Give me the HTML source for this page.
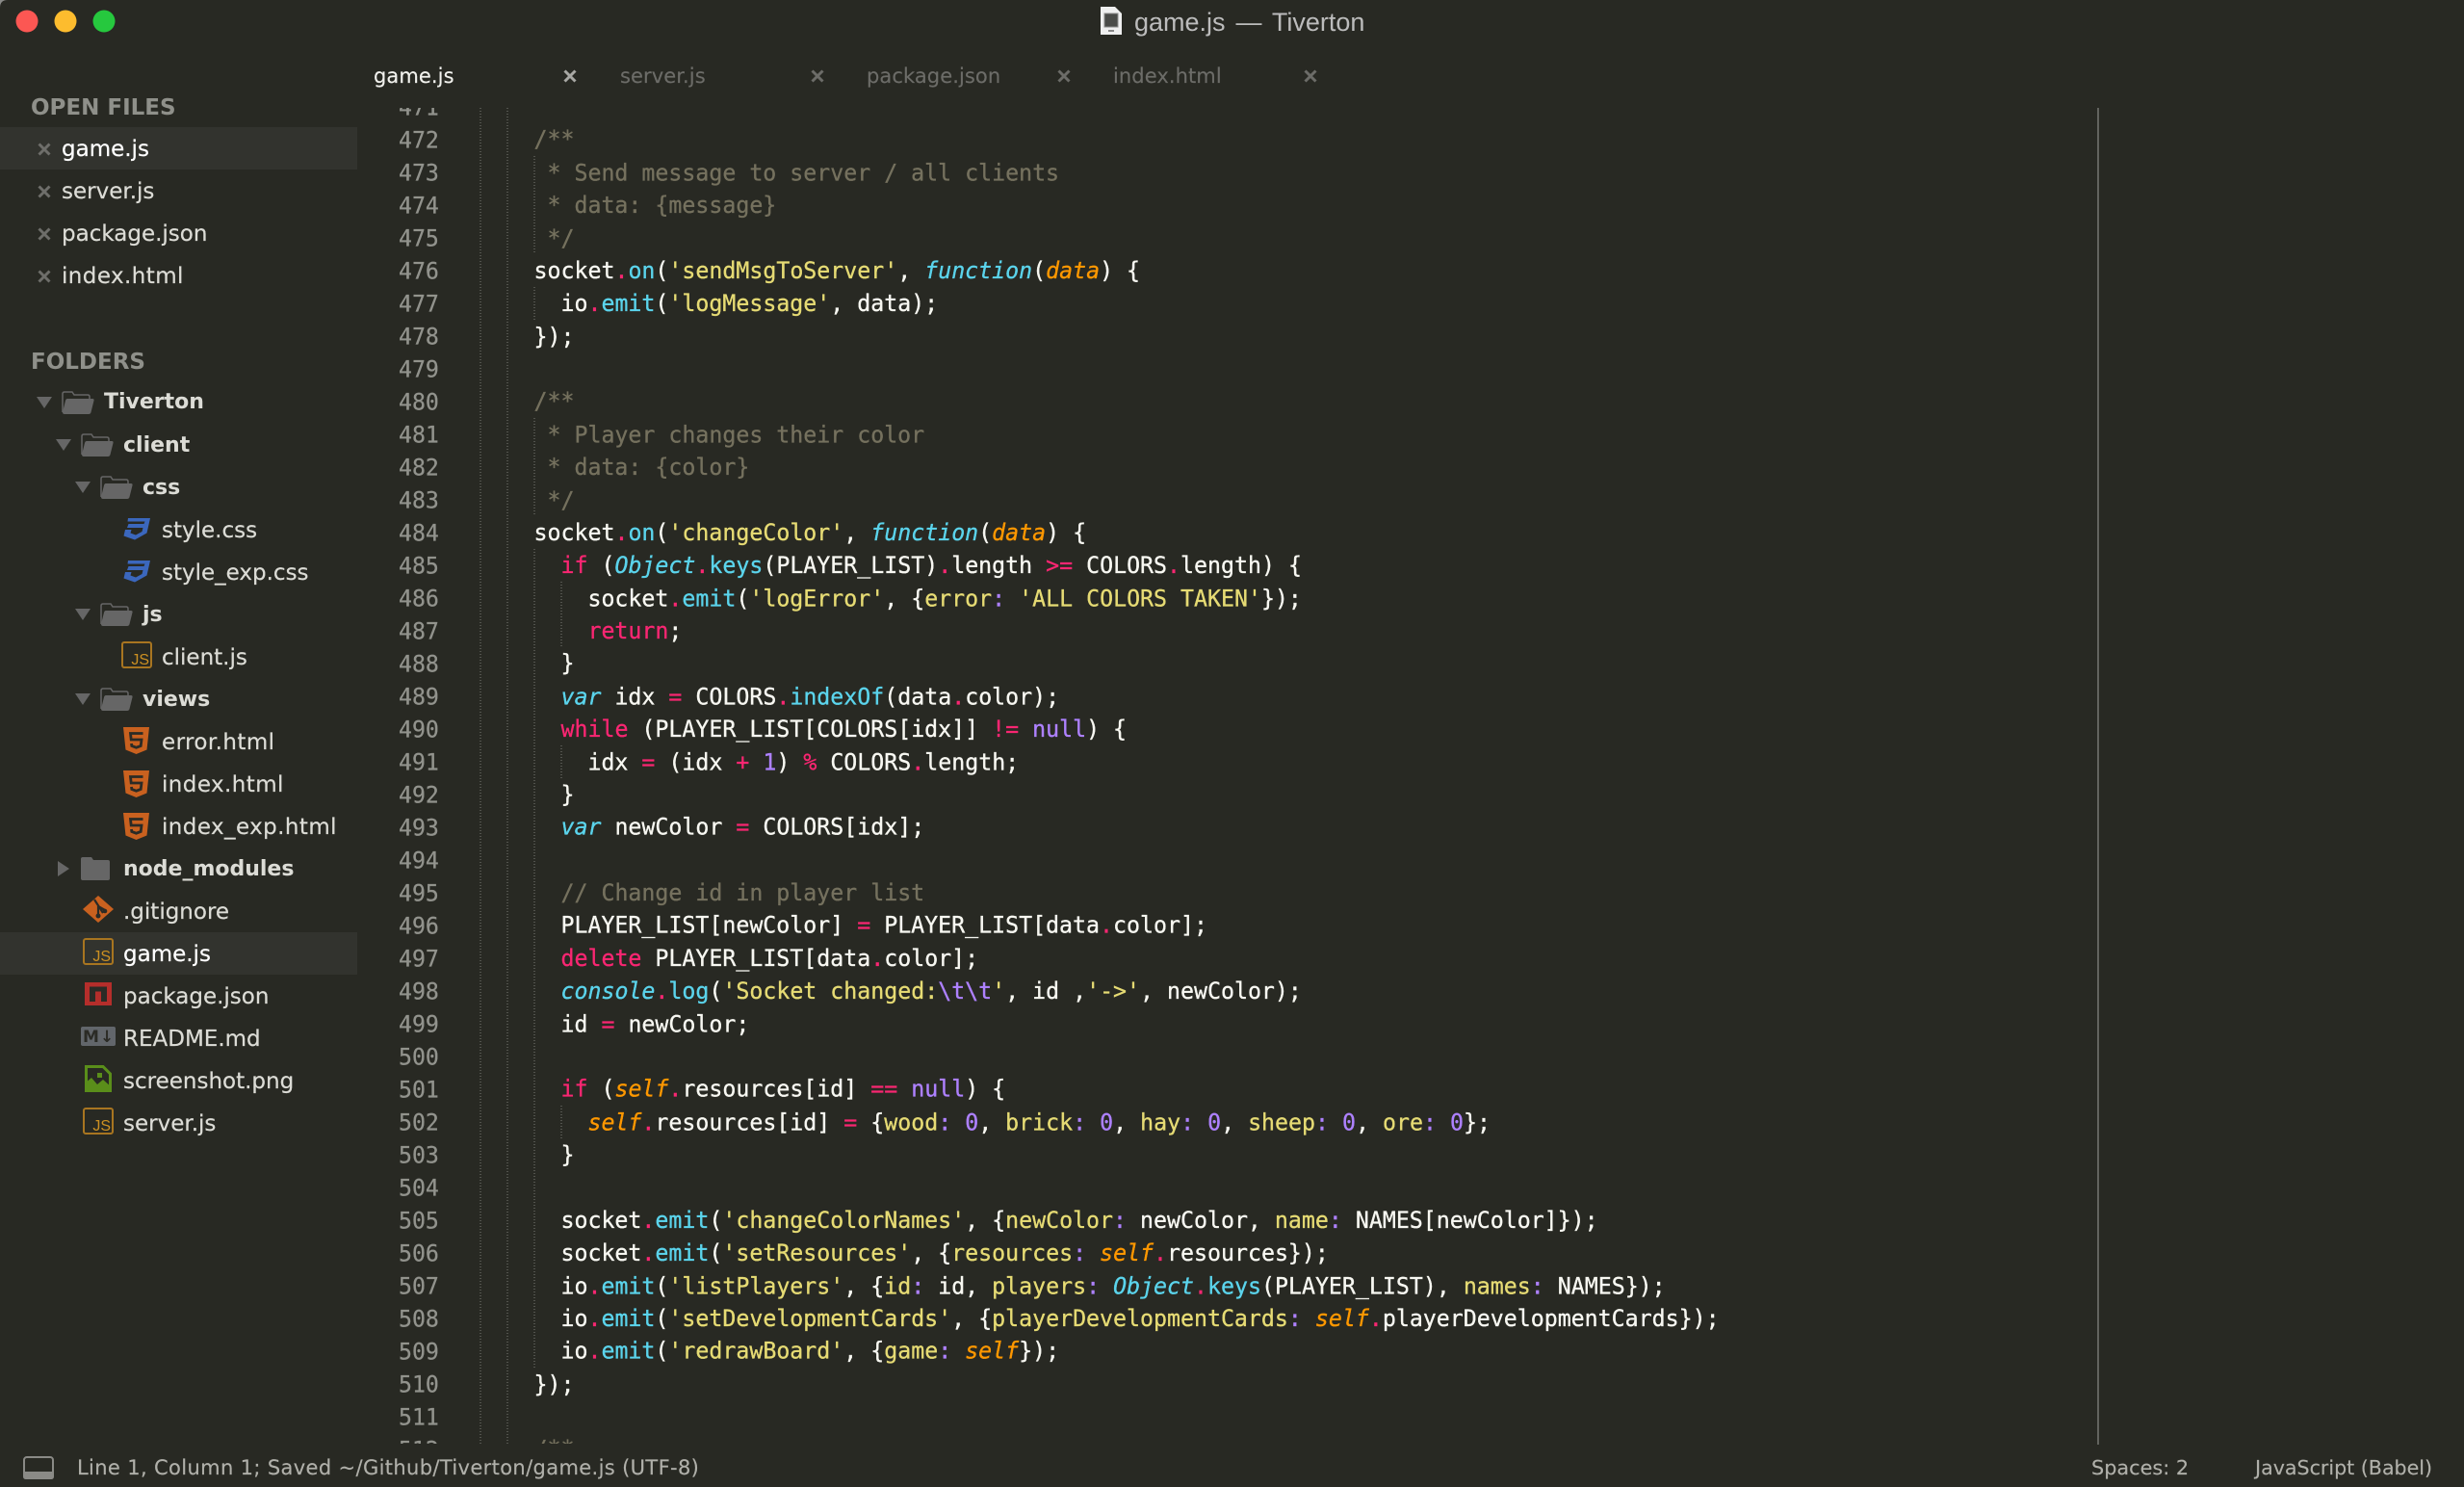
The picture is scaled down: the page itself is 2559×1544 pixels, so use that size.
<!DOCTYPE html>
<html><head><meta charset="utf-8"><title>game.js — Tiverton</title>
<style>
html,body{margin:0;padding:0;background:#282923;}
#w{position:relative;width:2559px;height:1544px;overflow:hidden;background:#282923;font-family:"DejaVu Sans","Liberation Sans",sans-serif;}
.a{position:absolute;white-space:pre;}
.s{position:absolute;white-space:pre;font-size:23px;line-height:44px;height:44px;color:#dcdcd6;margin-top:1px;-webkit-text-stroke:.2px currentColor;}
.m{letter-spacing:.42px;}
.b{font-weight:bold;font-size:22px;color:#dcdcd6;-webkit-text-stroke:0;}
.h{font-weight:bold;font-size:23px;color:#8f908a;margin-top:2px;-webkit-text-stroke:0;}
.sel{position:absolute;left:0;width:371px;height:44px;background:#32332e;}
.t{position:absolute;top:57px;line-height:44px;font-size:21px;letter-spacing:.08px;color:#6c6c68;white-space:pre;-webkit-text-stroke:.15px currentColor;}
.i{position:absolute;display:block;overflow:visible;}
.js{position:absolute;width:28px;height:24px;border:2px solid #a87520;border-radius:3px;color:#cc9022;font-size:16px;line-height:14px;}
.js span{position:absolute;right:1px;bottom:-1px;font-family:"Liberation Sans",sans-serif;}
#ln{position:absolute;left:0;top:112px;width:480px;height:1387px;overflow:hidden;}
#ln div{position:absolute;left:414px;font:23.2px/34px "DejaVu Sans Mono","Liberation Mono",monospace;color:#92938d;height:34px;margin-top:1px;transform:scaleY(1.05);-webkit-text-stroke:.25px currentColor;}
#clip{position:absolute;left:554.5px;top:112px;width:1620px;height:1387px;overflow:hidden;}
#clip pre{margin:-17px 0 0 0;font:23.24px/32.381px "DejaVu Sans Mono","Liberation Mono",monospace;color:#f8f8f2;white-space:pre;transform:scaleY(1.05);transform-origin:0 0;-webkit-text-stroke:.3px currentColor;}
.g{position:absolute;width:2px;background:repeating-linear-gradient(#52534d 0 1px,transparent 1px 3px);}
.c{color:#75715e}.k{color:#f92672}.f{color:#5bd4ec}.y{color:#e6db74}.n{color:#ae81ff}
.v{color:#5bd4ec;font-style:italic}.o{color:#ff9800;font-style:italic}
.st{position:absolute;top:1502px;line-height:44px;font-size:21px;color:#b0b0aa;white-space:pre;-webkit-text-stroke:.15px currentColor;}
</style></head><body><div id="w">

<svg width="0" height="0" style="position:absolute"><defs>
<symbol id="fo" viewBox="0 0 34 24"><path d="M1 22V3Q1 1 3 1H11L13 4H27Q29 4 29 6V8" fill="none" stroke="#666" stroke-width="1.5"/><path d="M1 22L4 10Q4.500 8 6 8H32Q34 8 33.500 10L30.500 22Q30 24 28 24H3Q1 24 1 22Z" fill="#666"/></symbol>
<symbol id="cs" viewBox="0 0 28 23"><path d="M5 0H28L24.500 15.500L12 22.500L0.500 18.500L2 12H8.500L7.500 15.500L13 17.500L19.500 14L20.500 10H4L5.500 6H21.500L22.500 3.500H4.500Z" fill="#3b67bd"/></symbol>
<symbol id="ht" viewBox="0 0 27 28"><path d="M0 0H27L24.500 23.500L13.500 28L2.500 23.500Z" fill="#c9611f"/><path d="M20.500 6.500H7.500L8.200 13H19L18.200 19.500L13.500 21.200L8.800 19.500L8.500 17" fill="none" stroke="#2b2b26" stroke-width="2.800"/></symbol>
<symbol id="dn" viewBox="0 0 16 12"><path d="M0 0H16L8 12Z" fill="#666"/></symbol>
<symbol id="x" viewBox="0 0 14 14"><path d="M1.500 1.500L12.500 12.500M12.500 1.500L1.500 12.500" stroke="currentColor" stroke-width="3" fill="none"/></symbol>
</defs></svg>

<!-- corners -->
<svg class="i" style="left:0;top:0" width="10" height="10"><path d="M0 0H8Q0 0 0 8Z" fill="#8a8a88"/></svg>

<!-- traffic lights -->
<svg class="i" style="left:0;top:0" width="130" height="44"><circle cx="28" cy="22" r="11.500" fill="#fc5753"/><circle cx="68" cy="22" r="11.500" fill="#fdbc2e"/><circle cx="108" cy="22" r="11.500" fill="#26c83e"/></svg>

<!-- title -->
<svg class="i" style="left:1143px;top:7px" width="23" height="30"><path d="M0 0H15L22 7V29H0Z" fill="#efefef"/><rect x="4" y="7" width="14" height="14" fill="#4a4b48" stroke="#8c8c8c" stroke-width="1"/><rect x="8" y="24" width="6" height="2" fill="#888"/></svg>
<div class="a" style="left:1178px;top:0;line-height:46px;font-family:'Liberation Sans',sans-serif;font-size:27px;word-spacing:3.4px;color:#bcbcbc;">game.js — Tiverton</div>

<!-- tabs -->
<div class="t" style="left:388px;color:#f2f2ee;">game.js</div>
<svg class="i" style="left:585px;top:72px;color:#a8a8a4" width="14" height="14"><use href="#x"/></svg>
<div class="t" style="left:644px;">server.js</div>
<svg class="i" style="left:842px;top:72px;color:#6c6c68" width="14" height="14"><use href="#x"/></svg>
<div class="t" style="left:900px;">package.json</div>
<svg class="i" style="left:1098px;top:72px;color:#6c6c68" width="14" height="14"><use href="#x"/></svg>
<div class="t" style="left:1156px;">index.html</div>
<svg class="i" style="left:1354px;top:72px;color:#6c6c68" width="14" height="14"><use href="#x"/></svg>

<!-- sidebar highlights -->
<div class="sel" style="top:132px"></div>
<div class="sel" style="top:968px"></div>

<!-- open files -->
<div class="s h" style="left:32px;top:88px">OPEN FILES</div>
<svg class="i" style="left:39px;top:148px;color:#6e6e6a" width="14" height="14"><use href="#x"/></svg>
<div class="s" style="left:64px;top:132px;color:#fff">game.js</div>
<svg class="i" style="left:39px;top:192px;color:#6e6e6a" width="14" height="14"><use href="#x"/></svg>
<div class="s" style="left:64px;top:176px">server.js</div>
<svg class="i" style="left:39px;top:236px;color:#6e6e6a" width="14" height="14"><use href="#x"/></svg>
<div class="s" style="left:64px;top:220px">package.json</div>
<svg class="i" style="left:39px;top:280px;color:#6e6e6a" width="14" height="14"><use href="#x"/></svg>
<div class="s m" style="left:64px;top:264px">index.html</div>

<!-- folders -->
<div class="s h" style="left:32px;top:352px">FOLDERS</div>

<svg class="i" style="left:38px;top:412px" width="16" height="12"><use href="#dn"/></svg>
<svg class="i" style="left:64px;top:406px" width="34" height="24"><use href="#fo"/></svg>
<div class="s b" style="left:108px;top:395px">Tiverton</div>

<svg class="i" style="left:58px;top:456px" width="16" height="12"><use href="#dn"/></svg>
<svg class="i" style="left:84px;top:450px" width="34" height="24"><use href="#fo"/></svg>
<div class="s b" style="left:128px;top:440px">client</div>

<svg class="i" style="left:78px;top:500px" width="16" height="12"><use href="#dn"/></svg>
<svg class="i" style="left:104px;top:494px" width="34" height="24"><use href="#fo"/></svg>
<div class="s b" style="left:148px;top:484px">css</div>

<svg class="i" style="left:128px;top:538px" width="28" height="23"><use href="#cs"/></svg>
<div class="s" style="left:168px;top:528px">style.css</div>
<svg class="i" style="left:128px;top:582px" width="28" height="23"><use href="#cs"/></svg>
<div class="s" style="left:168px;top:572px">style_exp.css</div>

<svg class="i" style="left:78px;top:632px" width="16" height="12"><use href="#dn"/></svg>
<svg class="i" style="left:104px;top:626px" width="34" height="24"><use href="#fo"/></svg>
<div class="s b" style="left:148px;top:616px">js</div>

<div class="js" style="left:126px;top:666px"><span>JS</span></div>
<div class="s" style="left:168px;top:660px">client.js</div>

<svg class="i" style="left:78px;top:720px" width="16" height="12"><use href="#dn"/></svg>
<svg class="i" style="left:104px;top:714px" width="34" height="24"><use href="#fo"/></svg>
<div class="s b" style="left:148px;top:704px">views</div>

<svg class="i" style="left:128px;top:755px" width="27" height="28"><use href="#ht"/></svg>
<div class="s m" style="left:168px;top:748px">error.html</div>
<svg class="i" style="left:128px;top:800px" width="27" height="28"><use href="#ht"/></svg>
<div class="s m" style="left:168px;top:792px">index.html</div>
<svg class="i" style="left:128px;top:844px" width="27" height="28"><use href="#ht"/></svg>
<div class="s m" style="left:168px;top:836px">index_exp.html</div>

<svg class="i" style="left:60px;top:894px" width="12" height="16"><path d="M0 0L12 8L0 16Z" fill="#666"/></svg>
<svg class="i" style="left:84px;top:890px" width="30" height="24"><path d="M0 2Q0 0 2 0H11L13 3H28Q30 3 30 5V22Q30 24 28 24H2Q0 24 0 22Z" fill="#666"/></svg>
<div class="s b" style="left:128px;top:880px">node_modules</div>

<svg class="i" style="left:86px;top:930px" width="32" height="28"><path d="M16 0L32 14L16 28L0 14Z" fill="#c9611f"/><path d="M12 4L21 18M16 11V21M16 11L23 15" stroke="#2b2b26" stroke-width="2.200" fill="none"/><circle cx="16" cy="21" r="2.500" fill="#2b2b26"/><circle cx="23" cy="16" r="2.300" fill="#2b2b26"/></svg>
<div class="s" style="left:128px;top:924px">.gitignore</div>

<div class="js" style="left:86px;top:974px"><span>JS</span></div>
<div class="s" style="left:128px;top:968px;color:#fff">game.js</div>

<svg class="i" style="left:88px;top:1020px" width="28" height="24"><rect width="28" height="24" fill="#b52e2b"/><path d="M5 4.500H23V20H17V9.500H11V20H5Z" fill="#2b2b26"/></svg>
<div class="s" style="left:128px;top:1012px">package.json</div>

<svg class="i" style="left:84px;top:1066px" width="36" height="20"><rect width="36" height="20" rx="2" fill="#62666b"/><text x="2" y="16" font-family="DejaVu Sans,sans-serif" font-weight="bold" font-size="17" fill="#2b2b26">M</text><text x="20" y="16" font-family="DejaVu Sans,sans-serif" font-weight="bold" font-size="17" fill="#2b2b26">↓</text></svg>
<div class="s" style="left:128px;top:1056px">README.md</div>

<svg class="i" style="left:88px;top:1106px" width="28" height="28"><path d="M1.500 1.500H19L26.500 9V26.500H1.500Z" fill="none" stroke="#5a8e1a" stroke-width="3"/><path d="M0 28V19L7 13L13 20L19 15L28 23V28Z" fill="#5a8e1a"/><rect x="13" y="8" width="5" height="5" fill="#5a8e1a"/></svg>
<div class="s" style="left:128px;top:1100px">screenshot.png</div>

<div class="js" style="left:86px;top:1150px"><span>JS</span></div>
<div class="s" style="left:128px;top:1144px">server.js</div>

<!-- gutter numbers -->
<div id="ln">
<div style="top:-18px">471</div><div style="top:16px">472</div><div style="top:50px">473</div><div style="top:84px">474</div><div style="top:118px">475</div><div style="top:152px">476</div><div style="top:186px">477</div><div style="top:220px">478</div><div style="top:254px">479</div><div style="top:288px">480</div><div style="top:322px">481</div><div style="top:356px">482</div><div style="top:390px">483</div><div style="top:424px">484</div><div style="top:458px">485</div><div style="top:492px">486</div><div style="top:526px">487</div><div style="top:560px">488</div><div style="top:594px">489</div><div style="top:628px">490</div><div style="top:662px">491</div><div style="top:696px">492</div><div style="top:730px">493</div><div style="top:764px">494</div><div style="top:798px">495</div><div style="top:832px">496</div><div style="top:866px">497</div><div style="top:900px">498</div><div style="top:934px">499</div><div style="top:968px">500</div><div style="top:1002px">501</div><div style="top:1036px">502</div><div style="top:1070px">503</div><div style="top:1104px">504</div><div style="top:1138px">505</div><div style="top:1172px">506</div><div style="top:1206px">507</div><div style="top:1240px">508</div><div style="top:1274px">509</div><div style="top:1308px">510</div><div style="top:1342px">511</div><div style="top:1376px">512</div>
</div>

<!-- guides -->
<div class="g" style="left:498px;top:112px;height:1387px"></div>
<div class="g" style="left:526px;top:112px;height:1387px"></div>
<div class="g" style="left:554px;top:162px;height:102px"></div>
<div class="g" style="left:554px;top:298px;height:34px"></div>
<div class="g" style="left:554px;top:434px;height:102px"></div>
<div class="g" style="left:554px;top:570px;height:850px"></div>
<div class="g" style="left:582px;top:604px;height:68px"></div>
<div class="g" style="left:582px;top:774px;height:34px"></div>
<div class="g" style="left:582px;top:1148px;height:34px"></div>

<!-- ruler -->
<div style="position:absolute;left:2178px;top:112px;width:1.500px;height:1388px;background:#62635e"></div>

<!-- code -->
<div id="clip"><pre>

<span class="c">/**</span>
<span class="c"> * Send message to server / all clients</span>
<span class="c"> * data: {message}</span>
<span class="c"> */</span>
socket<span class="k">.</span><span class="f">on</span>(<span class="y">'sendMsgToServer'</span>, <span class="v">function</span>(<span class="o">data</span>) {
  io<span class="k">.</span><span class="f">emit</span>(<span class="y">'logMessage'</span>, data);
});

<span class="c">/**</span>
<span class="c"> * Player changes their color</span>
<span class="c"> * data: {color}</span>
<span class="c"> */</span>
socket<span class="k">.</span><span class="f">on</span>(<span class="y">'changeColor'</span>, <span class="v">function</span>(<span class="o">data</span>) {
  <span class="k">if</span> (<span class="v">Object</span><span class="k">.</span><span class="f">keys</span>(PLAYER_LIST)<span class="k">.</span>length <span class="k">&gt;=</span> COLORS<span class="k">.</span>length) {
    socket<span class="k">.</span><span class="f">emit</span>(<span class="y">'logError'</span>, {<span class="y">error</span><span class="n">:</span> <span class="y">'ALL COLORS TAKEN'</span>});
    <span class="k">return</span>;
  }
  <span class="v">var</span> idx <span class="k">=</span> COLORS<span class="k">.</span><span class="f">indexOf</span>(data<span class="k">.</span>color);
  <span class="k">while</span> (PLAYER_LIST[COLORS[idx]] <span class="k">!=</span> <span class="n">null</span>) {
    idx <span class="k">=</span> (idx <span class="k">+</span> <span class="n">1</span>) <span class="k">%</span> COLORS<span class="k">.</span>length;
  }
  <span class="v">var</span> newColor <span class="k">=</span> COLORS[idx];

  <span class="c">// Change id in player list</span>
  PLAYER_LIST[newColor] <span class="k">=</span> PLAYER_LIST[data<span class="k">.</span>color];
  <span class="k">delete</span> PLAYER_LIST[data<span class="k">.</span>color];
  <span class="v">console</span><span class="k">.</span><span class="f">log</span>(<span class="y">'Socket changed:</span><span class="n">\t\t</span><span class="y">'</span>, id ,<span class="y">'-&gt;'</span>, newColor);
  id <span class="k">=</span> newColor;

  <span class="k">if</span> (<span class="o">self</span><span class="k">.</span>resources[id] <span class="k">==</span> <span class="n">null</span>) {
    <span class="o">self</span><span class="k">.</span>resources[id] <span class="k">=</span> {<span class="y">wood</span><span class="n">:</span> <span class="n">0</span>, <span class="y">brick</span><span class="n">:</span> <span class="n">0</span>, <span class="y">hay</span><span class="n">:</span> <span class="n">0</span>, <span class="y">sheep</span><span class="n">:</span> <span class="n">0</span>, <span class="y">ore</span><span class="n">:</span> <span class="n">0</span>};
  }

  socket<span class="k">.</span><span class="f">emit</span>(<span class="y">'changeColorNames'</span>, {<span class="y">newColor</span><span class="n">:</span> newColor, <span class="y">name</span><span class="n">:</span> NAMES[newColor]});
  socket<span class="k">.</span><span class="f">emit</span>(<span class="y">'setResources'</span>, {<span class="y">resources</span><span class="n">:</span> <span class="o">self</span><span class="k">.</span>resources});
  io<span class="k">.</span><span class="f">emit</span>(<span class="y">'listPlayers'</span>, {<span class="y">id</span><span class="n">:</span> id, <span class="y">players</span><span class="n">:</span> <span class="v">Object</span><span class="k">.</span><span class="f">keys</span>(PLAYER_LIST), <span class="y">names</span><span class="n">:</span> NAMES});
  io<span class="k">.</span><span class="f">emit</span>(<span class="y">'setDevelopmentCards'</span>, {<span class="y">playerDevelopmentCards</span><span class="n">:</span> <span class="o">self</span><span class="k">.</span>playerDevelopmentCards});
  io<span class="k">.</span><span class="f">emit</span>(<span class="y">'redrawBoard'</span>, {<span class="y">game</span><span class="n">:</span> <span class="o">self</span>});
});

<span class="c">/**</span>
</pre></div>

<!-- status -->
<svg class="i" style="left:24px;top:1512px" width="32" height="24"><rect x="1" y="1" width="30" height="22" rx="3" fill="none" stroke="#8a8a86" stroke-width="2"/><path d="M0 16H32V21Q32 24 29 24H3Q0 24 0 21Z" fill="#8a8a86"/></svg>
<div class="st" style="left:80px;letter-spacing:.36px">Line 1, Column 1; Saved ~/Github/Tiverton/game.js (UTF-8)</div>
<div class="st" style="left:2172px;font-size:20.8px">Spaces: 2</div>
<div class="st" style="left:2342px;font-size:20.6px">JavaScript (Babel)</div>

</div></body></html>
